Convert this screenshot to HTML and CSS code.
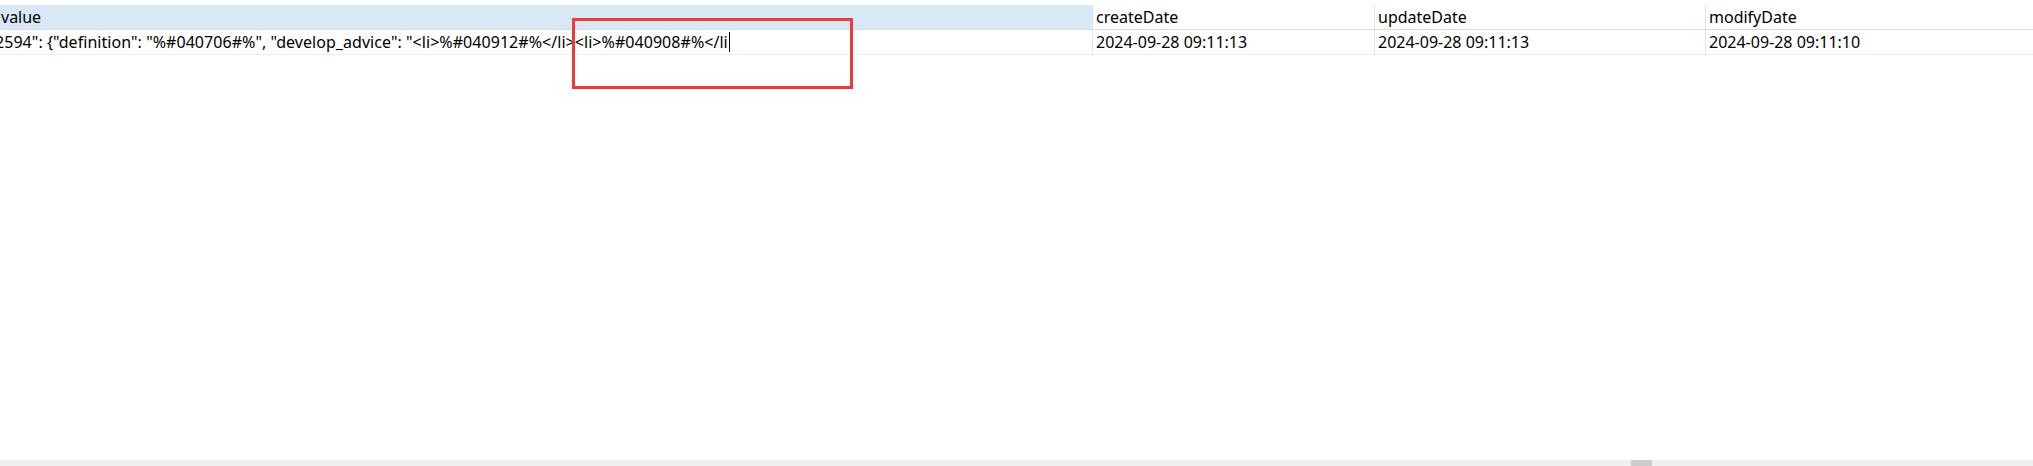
FILE: index.html
```html
<!DOCTYPE html>
<html>
<head>
<meta charset="utf-8">
<link rel="stylesheet" href="styles.css">
</head>
<body>
<div class="grid-view">
  <div class="top-gap"></div>
  <div class="row header">
    <div class="cell col-value selected"><span class="head-text">value</span></div>
    <div class="cell col-create">createDate</div>
    <div class="cell col-update">updateDate</div>
    <div class="cell col-modify">modifyDate</div>
  </div>
  <div class="row data">
    <div class="cell col-value"><span class="scrolled">2594": {"definition": "%#040706#%", "develop_advice": "&lt;li&gt;%#040912#%&lt;/li&gt;&lt;li&gt;%#040908#%&lt;/li<span class="caret"></span></span></div>
    <div class="cell col-create">2024-09-28 09:11:13</div>
    <div class="cell col-update">2024-09-28 09:11:13</div>
    <div class="cell col-modify">2024-09-28 09:11:10</div>
  </div>
  <div class="filler"></div>
  <div class="hscroll"><div class="thumb"></div></div>
  <div class="highlight-box"></div>
</div>
</body>
</html>
```

FILE: styles.css
```css
html, body {
  margin: 0;
  padding: 0;
  background: #ffffff;
}

.grid-view {
  position: relative;
  width: 2033px;
  height: 466px;
  display: flex;
  flex-direction: column;
  overflow: hidden;
  font-family: "Noto Sans", "Open Sans", sans-serif;
  font-size: 16px;
  color: #000000;
}

.top-gap {
  height: 5px;
  flex: none;
}

.row {
  display: grid;
  grid-template-columns: 1092px 282px 331px 1fr;
  flex: none;
}

.row.header {
  height: 24px;
  border-bottom: 1px solid #dcdcdc;
}

.row.data {
  height: 24px;
  border-bottom: 1px solid #ececec;
}

.cell {
  line-height: 24px;
  white-space: nowrap;
  overflow: hidden;
  padding-left: 3px;
  border-left: 1px solid #e3e3e3;
}

.cell.col-value {
  border-left: none;
  padding-left: 0;
}

.header .cell.selected {
  background: #d9e8f7;
}

.head-text {
  padding-left: 1px;
}

.scrolled {
  display: inline-block;
  margin-left: -5px;
  letter-spacing: 0.05px;
}

.caret {
  display: inline-block;
  width: 1px;
  height: 20px;
  background: #000000;
  vertical-align: -4px;
  margin-left: 1px;
}

.filler {
  flex: 1;
}

.hscroll {
  flex: none;
  height: 6px;
  background: #f0f0f0;
  display: flex;
}

.thumb {
  margin-left: 1631px;
  width: 21px;
  background: #cdcdcd;
}

.highlight-box {
  position: absolute;
  left: 572px;
  top: 18px;
  width: 281px;
  height: 71px;
  box-sizing: border-box;
  border: 3px solid #f03a3a;
}
```
